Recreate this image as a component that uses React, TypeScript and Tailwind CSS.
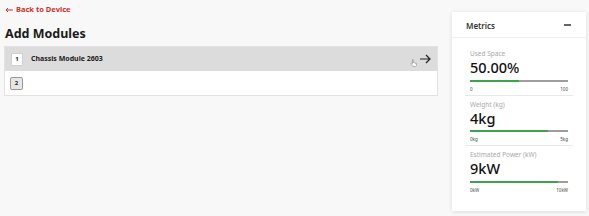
import React from 'react';

interface Metric {
  label: string;
  value: string;
  pct: number;
  min: string;
  max: string;
}

const metrics: Metric[] = [
  { label: 'Used Space', value: '50.00%', pct: 50, min: '0', max: '100' },
  { label: 'Weight (kg)', value: '4kg', pct: 80, min: '0kg', max: '5kg' },
  { label: 'Estimated Power (kW)', value: '9kW', pct: 90, min: '0kW', max: '10kW' },
];

const App: React.FC = () => {
  return (
    <div
      className="w-[589px] h-[216px] bg-[#f8f8f8] flex text-[#1a1a1a] overflow-hidden"
      style={{ fontFamily: '"Noto Sans", "Open Sans", sans-serif' }}
    >
      {/* left side */}
      <div className="w-[438px] pl-[4px] pt-[3px]">
        <a className="flex items-center gap-[3px] text-[#d32f2f] text-[7.5px] font-bold leading-[13px] pl-[1px]">
          <svg width="8" height="6" viewBox="0 0 8 6" fill="none" stroke="#d32f2f" strokeWidth="1">
            <path d="M8 3H1M3 1L1 3l2 2" />
          </svg>
          <span>Back to Device</span>
        </a>
        <h1 className="mt-[10px] text-[12.5px] font-bold leading-[16px] pl-[1px]">Add Modules</h1>
        <div className="mt-[4px] border border-[#e2e2e2] bg-white">
          <div className="h-[24px] bg-[#dcdcdc] flex items-center pl-[6px] pr-[6px]">
            <span className="w-[12px] h-[13px] bg-white border border-[#d0d0d0] rounded-[1px] flex items-center justify-center text-[6px] font-bold">
              1
            </span>
            <span className="ml-[8px] text-[7px] font-bold">Chassis Module 2603</span>
            <div className="ml-auto flex items-end">
              <svg width="7" height="8" viewBox="0 0 14 16" className="mb-[-3px] mr-[2px]">
                <path
                  d="M5 2v7l-1.5-1.2c-.7-.5-1.6 0-1.3.8L4.5 13c.5 1 1.4 2 3 2h2.5c1.7 0 3-1.3 3-3V9.5c0-.7-.6-1.2-1.2-1.2-.4 0-.8.2-1 .5 0-.6-.6-1.1-1.200-1.1-.4 0-.8.2-1 .5 0-.6-.5-1.1-1.2-1.1-.3 0-.6.1-.8.3V2c0-.6-.4-1-1-1s-1 .4-1 1z"
                  fill="#fff"
                  stroke="#777"
                  strokeWidth="1"
                />
              </svg>
              <svg width="12" height="10" viewBox="0 0 12 10" fill="none" stroke="#222" strokeWidth="1.2">
                <path d="M1 5h10M7 1l4 4-4 4" />
              </svg>
            </div>
          </div>
          <div className="h-[24px] flex items-center pl-[5px]">
            <span className="w-[13px] h-[13px] bg-[#e6e6e6] border border-[#9a9a9a] rounded-[2px] flex items-center justify-center text-[6px] font-bold">
              2
            </span>
          </div>
        </div>
      </div>

      {/* metrics panel */}
      <div className="ml-[14px] mt-[12px] w-[134px] h-[199px] bg-white shadow-[0_1px_4px_rgba(0,0,0,0.12)]">
        <div className="h-[26px] flex items-center justify-between pl-[14px] pr-[15px] border-b border-[#f0f0f0]">
          <span className="text-[8px] font-semibold text-[#333] mt-[2px]">Metrics</span>
          <span className="w-[7px] h-[1.5px] bg-[#666] mt-[1px]" />
        </div>
        <div className="px-[13px] pt-[11px]">
          {metrics.map((m, i) => (
            <div
              key={m.label}
              className={`px-[5px] ${i < metrics.length - 1 ? 'border-b border-[#e8e8e8] pb-[2px] mb-[4px]' : ''}`}
            >
              <div className="text-[6.5px] text-[#a8a8a8] leading-[9px]">{m.label}</div>
              <div className="text-[14.5px] font-medium leading-[18px] text-[#111]">{m.value}</div>
              <div className="mt-[3.5px] h-[2px] bg-[#9e9e9e] flex">
                <div className="h-full bg-[#3fa34d]" style={{ width: `${m.pct}%` }} />
              </div>
              <div className="flex justify-between text-[4.5px] text-[#444] leading-[8px] mt-[3px]">
                <span>{m.min}</span>
                <span>{m.max}</span>
              </div>
            </div>
          ))}
        </div>
      </div>
    </div>
  );
};

export default App;
